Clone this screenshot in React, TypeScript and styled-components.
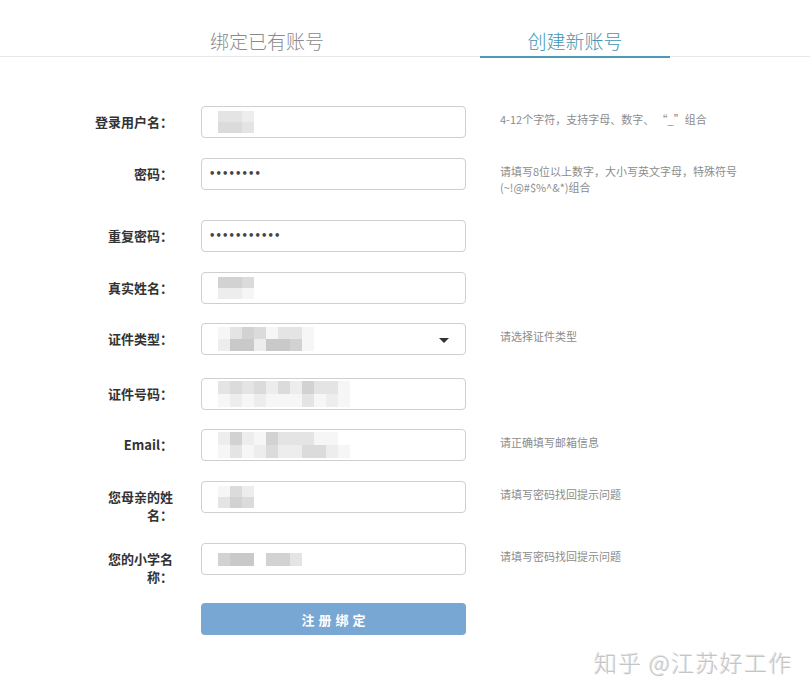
import React from "react";
import styled, { createGlobalStyle } from "styled-components";

const Global = createGlobalStyle`
  html, body { margin: 0; padding: 0; background: #fff; }
  body { font-family: "Noto Sans CJK SC", "Noto Sans", sans-serif; color: #333; }
  * { box-sizing: border-box; }
`;

const Page = styled.div`
  position: relative;
  width: 810px;
  height: 694px;
  overflow: hidden;
  background: #fff;
`;

const Header = styled.div`
  display: flex;
  align-items: flex-start;
  height: 57px;
  border-bottom: 1px solid #e8e8e8;
  padding-left: 172px;
  gap: 118px;
`;

const Tab = styled.div<{ $active?: boolean }>`
  width: 190px;
  padding-top: 28px;
  line-height: 26px;
  height: 58px;
  text-align: center;
  font-size: 19px;
  font-weight: 300;
  color: ${(p) => (p.$active ? "#3f95b1" : "#8a8a8a")};
  border-bottom: 2px solid ${(p) => (p.$active ? "#4b9bb4" : "transparent")};
`;

const Form = styled.div`
  display: flex;
  flex-direction: column;
  padding: 49px 0 0 93px;
`;

const Row = styled.div<{ $gap?: number }>`
  display: flex;
  align-items: flex-start;
  margin-bottom: ${(p) => p.$gap ?? 19.5}px;
`;

const Label = styled.div`
  width: 80px;
  margin-right: 28px;
  padding-top: 7px;
  line-height: 18px;
  font-size: 13px;
  font-weight: 700;
  color: #333;
  text-align: right;
`;

const Field = styled.div`
  position: relative;
  width: 265px;
  height: 32px;
  border: 1px solid #cfcfcf;
  border-radius: 4px;
  background: #fff;
  display: flex;
  align-items: center;
  padding-left: 7px;
`;

const Dots = styled.span`
  font-family: "DejaVu Sans", sans-serif;
  font-size: 10px;
  font-weight: 700;
  letter-spacing: 0.1px;
  color: #444;
  line-height: 1;
`;

const Caret = styled.span`
  position: absolute;
  right: 16px;
  top: 14px;
  width: 0;
  height: 0;
  border-left: 5px solid transparent;
  border-right: 5px solid transparent;
  border-top: 5px solid #333;
`;

const Hint = styled.div`
  width: 248px;
  margin-left: 34px;
  padding: 5px 0 6px;
  line-height: 16px;
  font-size: 11px;
  color: #8c8c8c;
`;

const Mosaic = styled.div<{ $cols: number; $h: number }>`
  display: grid;
  margin-left: 9px;
  grid-template-columns: repeat(${(p) => p.$cols}, 12px);
  grid-auto-rows: ${(p) => p.$h}px;
  filter: blur(0.6px);
`;

const Cell = styled.span<{ $d: number }>`
  background: ${(p) => {
    const v = 255 - p.$d * 9;
    return `rgb(${v},${v},${v})`;
  }};
`;

const Button = styled.div`
  width: 265px;
  height: 32px;
  margin-left: 108px;
  border-radius: 4px;
  background: #79a7d3;
  color: #fff;
  font-size: 13px;
  font-weight: 700;
  letter-spacing: 4px;
  display: flex;
  align-items: center;
  justify-content: center;
  padding-left: 4px;
`;

const Watermark = styled.div`
  position: absolute;
  left: 594px;
  top: 646px;
  font-size: 23px;
  line-height: 32px;
  color: #c4c4c4;
  font-weight: 300;
  letter-spacing: 1.3px;
  text-shadow: 1px 1px 0 #fff, -1px -1px 0 #e6e6e6;
  white-space: nowrap;
`;

const Blur: React.FC<{ rows: string[]; h?: number }> = ({ rows, h = 11 }) => (
  <Mosaic $cols={rows[0].length} $h={h}>
    {rows.flatMap((r, i) =>
      r.split("").map((c, j) => <Cell key={`${i}-${j}`} $d={Number(c)} />)
    )}
  </Mosaic>
);

type RowDef = {
  label: string;
  content: React.ReactNode;
  hint?: string;
  select?: boolean;
  gap?: number;
};

const rows: RowDef[] = [
  {
    label: "登录用户名：",
    content: <Blur rows={["332", "443"]} />,
    hint: "4-12个字符，支持字母、数字、 “_”组合",
  },
  {
    label: "密码：",
    content: <Dots>••••••••</Dots>,
    hint: "请填写8位以上数字，大小写英文字母，特殊符号(~!@#$%^&*)组合",
  },
  { label: "重复密码：", content: <Dots>•••••••••••</Dots> },
  { label: "真实姓名：", content: <Blur rows={["554", "221"]} /> },
  {
    label: "证件类型：",
    content: <Blur rows={["13541331", "26626651"]} h={12} />,
    hint: "请选择证件类型",
    select: true,
    gap: 22.5,
  },
  { label: "证件号码：", content: <Blur rows={["343424253310", "121211131210"]} h={13} /> },
  {
    label: "Email：",
    content: <Blur rows={["252153331100", "131242244210"]} h={13} />,
    hint: "请正确填写邮箱信息",
  },
  {
    label: "您母亲的姓名：",
    content: <Blur rows={["142", "354"]} />,
    hint: "请填写密码找回提示问题",
  },
  {
    label: "您的小学名称：",
    content: <Blur rows={["5660553"]} h={13} />,
    hint: "请填写密码找回提示问题",
    gap: 17,
  },
];

export default function App() {
  return (
    <Page>
      <Global />
      <Header>
        <Tab>绑定已有账号</Tab>
        <Tab $active>创建新账号</Tab>
      </Header>
      <Form>
        {rows.map((r) => (
          <Row key={r.label} $gap={r.gap}>
            <Label>{r.label}</Label>
            <Field>
              {r.content}
              {r.select && <Caret />}
            </Field>
            {r.hint && <Hint>{r.hint}</Hint>}
          </Row>
        ))}
        <Button>注册绑定</Button>
      </Form>
      <Watermark>知乎 @江苏好工作</Watermark>
    </Page>
  );
}
